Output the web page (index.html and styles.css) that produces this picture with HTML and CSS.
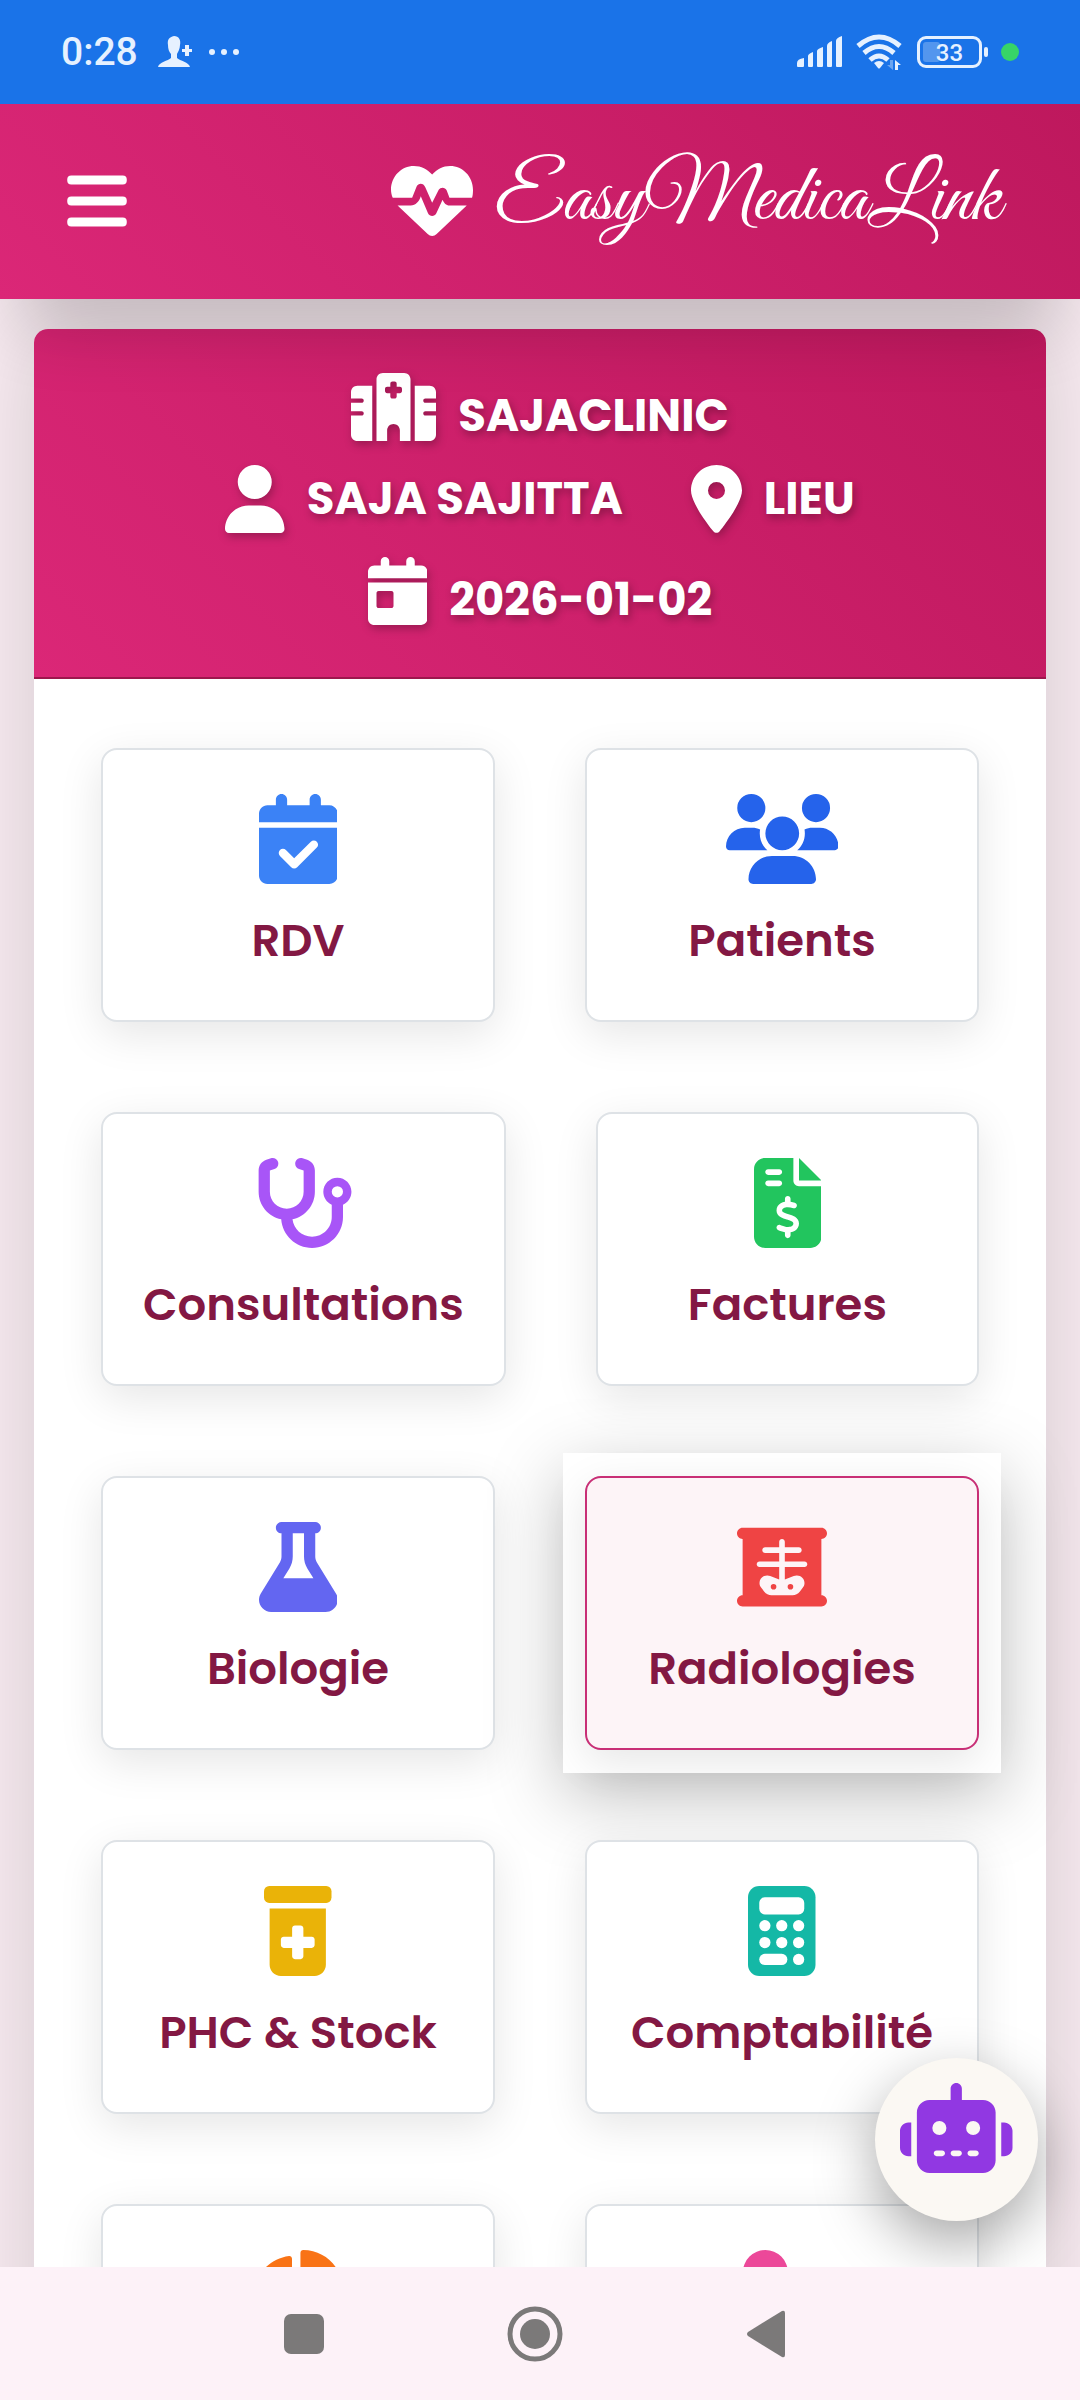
FILE: index.html
```
<!DOCTYPE html>
<html lang="fr">
<head>
    <meta charset="UTF-8">
    <meta name="viewport" content="width=device-width, initial-scale=1.0">
    <title>EasyMedicaLink</title>
    <link rel="stylesheet" href="styles.css">
</head>
<body>
    <!-- Barre d'état -->
    <div class="status-bar">
        <div class="status-group">
            <span class="clock">0:28</span>
            <svg class="status-user" viewBox="0 0 34 32"><path d="M16 0c5 0 7 4 6 9 0 4-2 7-3 9v4c3 3 12 4 13 9H0c1-5 10-6 13-9v-4c-2-2-3-5-3-9-1-5 1-8 6-9z"/><path d="M27 9h4v4h3v3h-3v4h-4v-4h-3v-3h3z"/></svg>
            <svg class="status-dots" viewBox="0 0 32 8"><circle cx="4" cy="4" r="3"/><circle cx="16" cy="4" r="3"/><circle cx="28" cy="4" r="3"/></svg>
        </div>
        <div class="status-group status-right">
            <svg class="signal" viewBox="0 0 46 32"><path d="M0 30v-3q0-4 7-5v8q0 1-1 1H1q-1 0-1-1zM11 20q0-2 5-4v14q0 1-1 1h-3q-1 0-1-1zM20 15q0-2 6-4v19q0 1-1 1h-4q-1 0-1-1zM30 10q0-3 5-5v25q0 1-1 1h-3q-1 0-1-1zM39 5q0-3 6-5v30q0 1-1 1h-4q-1 0-1-1z"/></svg>
            <svg class="wifi" viewBox="0 0 46 36">
                <g fill="none" stroke="#e6f1ff" stroke-width="5"><path d="M2 12Q23-6 44 12"/><path d="M8 19Q23 6 38 19"/><path d="M14 26Q23 18 32 26"/></g>
                <path d="M18 29q5-4 10 0l-4 5q-1 1-2 0z"/><path d="M39 36V26l6 5h-3v5z"/><path opacity=".4" d="M37 26v10l-6-5h3v-5z"/>
            </svg>
            <div class="battery"><span class="battery-level"></span><span class="battery-text">33</span></div>
            <span class="green-dot"></span>
        </div>
    </div>

    <div class="app">
        <header class="header">
            <button class="menu-btn" type="button" aria-label="Menu">
                <svg class="icon-bars" viewBox="0 0 448 512"><rect y="64" width="448" height="68" rx="30"/><rect y="222" width="448" height="68" rx="30"/><rect y="380" width="448" height="68" rx="30"/></svg>
            </button>
            <a class="brand" href="#">
                <svg class="brand-icon" viewBox="0 0 512 512"><path d="M11 236C4 219 0 202 0 185 0 103 64 37 143 37c46 0 84 19 114 54 30-35 68-54 112-54 79 0 143 66 143 148 0 17-1 35-6 51H365l-17-46c-10-22-39-22-50-4l-41 81-43-97c-12-28-42-28-54-5l-28 71zM41 284h82c31 0 53-24 63-57l45 105c11 23 41 23 52 0l39-84c9 21 22 36 43 36h108L285 462c-16 16-40 16-56 0z"/></svg>
                <span class="brand-name">EasyMedicaLink</span>
            </a>
        </header>

        <main class="panel">
            <section class="banner">
                <div class="info-row info-row-low">
                    <div class="info">
                        <svg viewBox="0 0 640 512"><path d="M192 48c0-26.500 21.500-48 48-48L400 0c26.500 0 48 21.500 48 48l0 464-80 0 0-80c0-26.500-21.500-48-48-48s-48 21.500-48 48l0 80-80 0 0-464zM48 96l112 0 0 416L48 512c-26.500 0-48-21.500-48-48L0 320l80 0c8.800 0 16-7.200 16-16s-7.200-16-16-16L0 288l0-64 80 0c8.800 0 16-7.200 16-16s-7.200-16-16-16L0 192l0-48c0-26.500 21.500-48 48-48zm544 0c26.500 0 48 21.500 48 48l0 48-80 0c-8.800 0-16 7.200-16 16s7.200 16 16 16l80 0 0 64-80 0c-8.800 0-16 7.200-16 16s7.200 16 16 16l80 0 0 144c0 26.500-21.500 48-48 48l-112 0 0-416 112 0zM312 64c-8.800 0-16 7.200-16 16l0 24-24 0c-8.800 0-16 7.200-16 16l0 16c0 8.800 7.200 16 16 16l24 0 0 24c0 8.800 7.200 16 16 16l16 0c8.800 0 16-7.200 16-16l0-24 24 0c8.800 0 16-7.200 16-16l0-16c0-8.800-7.200-16-16-16l-24 0 0-24c0-8.800-7.200-16-16-16l-16 0z"/></svg>
                        <span>SAJACLINIC</span>
                    </div>
                </div>
                <div class="info-row">
                    <div class="info">
                        <svg viewBox="0 0 448 512"><path d="M224 256A128 128 0 1 0 224 0a128 128 0 1 0 0 256zm-45.700 48C79.800 304 0 383.800 0 482.300C0 498.700 13.300 512 29.700 512l388.600 0c16.400 0 29.700-13.300 29.700-29.700C448 383.800 368.200 304 269.700 304l-91.400 0z"/></svg>
                        <span>SAJA SAJITTA</span>
                    </div>
                    <div class="info">
                        <svg viewBox="0 0 384 512"><path d="M215.700 499.200C267 435 384 279.400 384 192C384 86 298 0 192 0S0 86 0 192c0 87.400 117 243 168.300 307.200c12.300 15.300 35.100 15.300 47.400 0zM192 128a64 64 0 1 1 0 128 64 64 0 1 1 0-128z"/></svg>
                        <span>LIEU</span>
                    </div>
                </div>
                <div class="info-row info-row-low">
                    <div class="info">
                        <svg viewBox="0 0 448 512"><path d="M128 0c17.700 0 32 14.300 32 32l0 32 128 0 0-32c0-17.700 14.300-32 32-32s32 14.300 32 32l0 32 48 0c26.500 0 48 21.500 48 48l0 48L0 160l0-48C0 85.500 21.500 64 48 64l48 0 0-32c0-17.700 14.300-32 32-32zM0 192l448 0 0 272c0 26.500-21.500 48-48 48L48 512c-26.500 0-48-21.500-48-48L0 192zm80 64c-8.800 0-16 7.200-16 16l0 96c0 8.800 7.200 16 16 16l96 0c8.800 0 16-7.200 16-16l0-96c0-8.800-7.200-16-16-16l-96 0z"/></svg>
                        <span>2026-01-02</span>
                    </div>
                </div>
            </section>

            <nav class="menu">
                <div class="menu-row">
                    <a class="tile-link" href="#">
                        <div class="tile">
                            <svg fill="#3b82f6" viewBox="0 0 448 512"><path d="M128 0c17.700 0 32 14.300 32 32l0 32 128 0 0-32c0-17.700 14.300-32 32-32s32 14.300 32 32l0 32 48 0c26.500 0 48 21.500 48 48l0 48L0 160l0-48C0 85.500 21.500 64 48 64l48 0 0-32c0-17.700 14.300-32 32-32zM0 192l448 0 0 272c0 26.500-21.500 48-48 48L48 512c-26.500 0-48-21.500-48-48L0 192zM329 305c9.400-9.400 9.400-24.600 0-33.900s-24.600-9.400-33.900 0l-95 95-47-47c-9.400-9.400-24.600-9.400-33.900 0s-9.400 24.600 0 33.900l64 64c9.400 9.400 24.600 9.400 33.900 0L329 305z"/></svg>
                            <span class="tile-label">RDV</span>
                        </div>
                    </a>
                    <a class="tile-link" href="#">
                        <div class="tile">
                            <svg fill="#2563eb" viewBox="0 0 640 512"><path d="M144 0a80 80 0 1 1 0 160A80 80 0 1 1 144 0zM512 0a80 80 0 1 1 0 160A80 80 0 1 1 512 0zM0 298.700C0 239.800 47.800 192 106.700 192l42.700 0c15.900 0 31 3.500 44.600 9.700c-1.300 7.200-1.900 14.700-1.900 22.300c0 38.200 16.800 72.500 43.300 96L21.300 320C9.600 320 0 310.400 0 298.700zM405.300 320c26.600-23.500 43.300-57.800 43.300-96c0-7.600-.7-15-1.900-22.300c13.600-6.300 28.700-9.700 44.600-9.700l42.700 0C592.200 192 640 239.800 640 298.700c0 11.800-9.600 21.300-21.300 21.300l-213.300 0zM224 224a96 96 0 1 1 192 0 96 96 0 1 1 -192 0zM128 485.300C128 411.700 187.700 352 261.300 352l117.300 0C452.300 352 512 411.700 512 485.300c0 14.700-11.900 26.700-26.700 26.700l-330.700 0c-14.700 0-26.700-11.900-26.700-26.700z"/></svg>
                            <span class="tile-label">Patients</span>
                        </div>
                    </a>
                </div>

                <div class="menu-row">
                    <a class="tile-link" href="#">
                        <div class="tile">
                            <svg fill="#a855f7" viewBox="0 0 576 512"><path d="M142.400 21.900c5.600 16.800-3.500 34.900-20.200 40.500L96 71.100 96 192c0 53 43 96 96 96s96-43 96-96l0-120.900-26.100-8.700c-16.800-5.600-25.800-23.700-20.200-40.500s23.700-25.800 40.500-20.200l26.100 8.700C334.400 19.100 352 43.500 352 71.100L352 192c0 77.200-54.600 141.600-127.300 156.700C231 404.600 278.400 448 336 448c61.900 0 112-50.100 112-112l0-70.700c-28.300-12.300-48-40.500-48-73.300c0-44.200 35.800-80 80-80s80 35.800 80 80c0 32.800-19.700 61-48 73.300l0 70.700c0 97.200-78.800 176-176 176c-92.900 0-168.900-71.900-175.500-163.100C87.200 334.200 32 269.600 32 192L32 71.100c0-27.500 17.600-52 43.800-60.700l26.100-8.700c16.800-5.600 34.900 3.500 40.500 20.200zM480 224a32 32 0 1 0 0-64 32 32 0 1 0 0 64z"/></svg>
                            <span class="tile-label">Consultations</span>
                        </div>
                    </a>
                    <a class="tile-link" href="#">
                        <div class="tile">
                            <svg fill="#22c55e" viewBox="0 0 384 512"><path d="M64 0C28.700 0 0 28.700 0 64L0 448c0 35.300 28.700 64 64 64l256 0c35.300 0 64-28.700 64-64l0-288-128 0c-17.700 0-32-14.300-32-32L224 0 64 0zM256 0l0 128 128 0L256 0zM64 80c0-8.800 7.200-16 16-16l64 0c8.800 0 16 7.200 16 16s-7.200 16-16 16L80 96c-8.800 0-16-7.200-16-16zm0 64c0-8.800 7.200-16 16-16l64 0c8.800 0 16 7.200 16 16s-7.200 16-16 16l-64 0c-8.800 0-16-7.200-16-16zm128 72c8.800 0 16 7.200 16 16l0 17.300c8.500 1.200 16.700 3.100 24.100 5.100c8.500 2.300 13.600 11 11.300 19.600s-11 13.600-19.600 11.300c-11.100-3-22-5.200-32.100-5.300c-8.400-.1-17.400 1.800-23.600 5.500c-5.700 3.400-8.100 7.300-8.100 12.800c0 3.700 1.300 6.500 7.300 10.100c6.900 4.100 16.600 7.100 29.200 10.900l.5 .1c11.300 3.400 25.300 7.600 36.300 14.600c12.100 7.600 22.400 19.700 22.700 38.200c.3 19.300-9.600 33.300-22.900 41.600c-7.700 4.800-16.400 7.600-25.100 9.100l0 17.100c0 8.800-7.200 16-16 16s-16-7.200-16-16l0-17.800c-11.200-2.100-21.700-5.700-30.900-8.900c-2.100-.7-4.200-1.400-6.200-2.100c-8.400-2.800-12.900-11.900-10.100-20.200s11.900-12.900 20.200-10.100c2.500 .8 4.800 1.600 7.100 2.400c13.600 4.600 24.600 8.400 36.300 8.700c9.100 .3 17.900-1.700 23.700-5.300c5.100-3.200 7.900-7.300 7.800-14c-.1-4.600-1.800-7.800-7.700-11.600c-6.800-4.300-16.500-7.400-29-11.200l-1.600-.5c-11-3.300-24.300-7.300-34.800-13.700c-12-7.200-22.600-18.900-22.700-37.300c-.1-19.400 10.800-32.800 23.800-40.500c7.500-4.400 15.800-7.200 24.100-8.700l0-17.300c0-8.800 7.200-16 16-16z"/></svg>
                            <span class="tile-label">Factures</span>
                        </div>
                    </a>
                </div>

                <div class="menu-row">
                    <a class="tile-link" href="#">
                        <div class="tile">
                            <svg fill="#6366f1" viewBox="0 0 448 512"><path d="M288 0L160 0 128 0C110.300 0 96 14.300 96 32s14.300 32 32 32l0 132.800c0 11.800-3.300 23.500-9.500 33.500L10.300 406.200C3.600 417.200 0 429.700 0 442.600C0 480.900 31.100 512 69.400 512l309.200 0c38.300 0 69.400-31.100 69.400-69.400c0-12.800-3.600-25.400-10.300-36.400L329.500 230.400c-6.200-10.100-9.500-21.700-9.500-33.500L320 64c17.700 0 32-14.300 32-32s-14.300-32-32-32L288 0zM192 196.800L192 64l64 0 0 132.800c0 23.700 6.600 46.900 19 67.100L309.500 320l-171 0L173 263.900c12.400-20.200 19-43.400 19-67.100z"/></svg>
                            <span class="tile-label">Biologie</span>
                        </div>
                    </a>
                    <a class="tile-link active" href="#">
                        <div class="tile">
                            <svg fill="#ef4444" viewBox="0 0 512 512"><path d="M0 64C0 46.300 14.300 32 32 32l448 0c17.700 0 32 14.300 32 32s-14.300 32-32 32l0 320c17.700 0 32 14.300 32 32s-14.300 32-32 32L32 480c-17.700 0-32-14.300-32-32s14.300-32 32-32L32 96C14.300 96 0 81.700 0 64zm256 32c-8.800 0-16 7.200-16 16l0 32-80 0c-8.800 0-16 7.200-16 16s7.200 16 16 16l80 0 0 48-112 0c-8.800 0-16 7.200-16 16s7.200 16 16 16l112 0 0 70.600L189.100 307c-5.200-2-10.600-3-16.200-3l-2.100 0c-23.600 0-42.800 19.200-42.800 42.800c0 9.600 3.200 18.900 9.100 26.400l18.200 23.200c9.700 12.400 24.600 19.600 40.300 19.600l120.800 0c15.700 0 30.600-7.200 40.300-19.600l18.200-23.200c5.900-7.500 9.100-16.800 9.100-26.400c0-23.600-19.200-42.800-42.800-42.800l-2.200 0c-5.500 0-11 1-16.200 3L272 326.600l0-70.600 112 0c8.800 0 16-7.200 16-16s-7.200-16-16-16l-112 0 0-48 80 0c8.800 0 16-7.200 16-16s-7.200-16-16-16l-80 0 0-32c0-8.800-7.200-16-16-16zM208 352a16 16 0 1 1 0 32 16 16 0 1 1 0-32zm80 16a16 16 0 1 1 32 0 16 16 0 1 1 -32 0z"/></svg>
                            <span class="tile-label">Radiologies</span>
                        </div>
                    </a>
                </div>

                <div class="menu-row">
                    <a class="tile-link" href="#">
                        <div class="tile">
                            <svg fill="#eab308" viewBox="0 0 384 512"><rect width="384" height="96" rx="30"/><path d="M32 128l320 0 0 320c0 35.300-28.700 64-64 64L96 512c-35.300 0-64-28.700-64-64l0-320zM160 240l0 48-48 0c-8.800 0-16 7.200-16 16l0 32c0 8.800 7.200 16 16 16l48 0 0 48c0 8.800 7.200 16 16 16l32 0c8.800 0 16-7.200 16-16l0-48 48 0c8.800 0 16-7.200 16-16l0-32c0-8.800-7.200-16-16-16l-48 0 0-48c0-8.800-7.200-16-16-16l-32 0c-8.800 0-16 7.200-16 16z" fill-rule="evenodd"/></svg>
                            <span class="tile-label">PHC &amp; Stock</span>
                        </div>
                    </a>
                    <a class="tile-link" href="#">
                        <div class="tile">
                            <svg fill="#14b8a6" viewBox="0 0 384 512"><rect width="384" height="512" rx="64"/><g fill="#fff"><rect x="64" y="64" width="256" height="98" rx="32"/><circle cx="96" cy="226" r="32"/><circle cx="192" cy="226" r="32"/><circle cx="288" cy="226" r="32"/><circle cx="96" cy="322" r="32"/><circle cx="192" cy="322" r="32"/><circle cx="288" cy="322" r="32"/><rect x="64" y="386" width="160" height="64" rx="32"/><circle cx="288" cy="418" r="32"/></g></svg>
                            <span class="tile-label">Comptabilité</span>
                        </div>
                    </a>
                </div>

                <div class="menu-row">
                    <a class="tile-link" href="#" aria-label="Statistiques">
                        <div class="tile">
                            <svg fill="#f97316" viewBox="0 0 576 512"><path d="M304 240l0-223.400c0-9 7-16.600 16-16.600C443.700 0 544 100.300 544 224c0 9-7.600 16-16.600 16L304 240zM32 272C32 150.700 122.100 50.300 239 34.300c9.200-1.300 17 6.100 17 15.400L256 288 412.500 444.500c6.700 6.700 6.200 17.700-1.500 23.100C371.800 495.600 323.800 512 272 512C139.500 512 32 404.600 32 272zm526.400 16c9.300 0 16.600 7.800 15.400 17c-7.700 55.900-34.600 105.600-73.900 142.300c-6 5.600-15.400 5.200-21.200-.7L320 288l238.400 0z"/></svg>
                        </div>
                    </a>
                    <a class="tile-link" href="#" aria-label="Utilisateurs">
                        <div class="tile">
                            <svg fill="#ec4899" viewBox="0 0 640 512"><path d="M224 256A128 128 0 1 0 224 0a128 128 0 1 0 0 256zm-45.700 48C79.800 304 0 383.800 0 482.300C0 498.700 13.300 512 29.700 512l388.600 0c16.400 0 29.700-13.300 29.700-29.700C448 383.800 368.200 304 269.700 304l-91.400 0z"/></svg>
                        </div>
                    </a>
                </div>
            </nav>
        </main>

        <button class="chat-btn" type="button" aria-label="Assistant">
            <svg viewBox="0 0 640 512"><path d="M320 0c17.700 0 32 14.300 32 32l0 64 120 0c39.800 0 72 32.200 72 72l0 272c0 39.800-32.200 72-72 72l-304 0c-39.800 0-72-32.200-72-72l0-272c0-39.800 32.200-72 72-72l120 0 0-64c0-17.700 14.300-32 32-32zM208 384c-8.800 0-16 7.200-16 16s7.200 16 16 16l32 0c8.800 0 16-7.200 16-16s-7.200-16-16-16l-32 0zm96 0c-8.800 0-16 7.200-16 16s7.200 16 16 16l32 0c8.800 0 16-7.200 16-16s-7.200-16-16-16l-32 0zm96 0c-8.800 0-16 7.200-16 16s7.200 16 16 16l32 0c8.800 0 16-7.200 16-16s-7.200-16-16-16l-32 0zM264 256a40 40 0 1 0 -80 0 40 40 0 1 0 80 0zm152 40a40 40 0 1 0 0-80 40 40 0 1 0 0 80zM48 224l16 0 0 192-16 0c-26.500 0-48-21.500-48-48l0-96c0-26.500 21.500-48 48-48zm544 0c26.500 0 48 21.500 48 48l0 96c0 26.500-21.500 48-48 48l-16 0 0-192 16 0z"/></svg>
        </button>
    </div>

    <!-- Barre de navigation -->
    <div class="nav-bar">
        <button type="button" aria-label="Applications"><svg viewBox="0 0 56 56"><rect x="8" y="8" width="40" height="40" rx="7"/></svg></button>
        <button type="button" aria-label="Accueil"><svg viewBox="0 0 56 56"><circle cx="28" cy="28" r="25" fill="none" stroke="#7b7979" stroke-width="5"/><circle cx="28" cy="28" r="15"/></svg></button>
        <button type="button" aria-label="Retour"><svg viewBox="0 0 56 56"><path d="M10 26L44 5q3-1 3 2v42q0 3-3 2L10 30q-2-2 0-4z"/></svg></button>
    </div>
</body>
</html>
```
FILE: styles.css
```
* {
    box-sizing: border-box;
}

body {
    margin: 0;
    height: 100vh;
    display: flex;
    flex-direction: column;
    overflow: hidden;
    font-family: Poppins, Inter, sans-serif;
    background: #fdf2f8;
}

button {
    border: none;
    padding: 0;
    background: none;
    cursor: pointer;
}

a {
    color: inherit;
    text-decoration: none;
}

svg {
    display: block;
}

/* Barre d'état */
.status-bar {
    height: 104px;
    flex-shrink: 0;
    display: flex;
    justify-content: space-between;
    align-items: center;
    padding: 0 61px;
    background: #1a73e8;
    color: #e6f1ff;
    fill: #e6f1ff;
    font-family: Roboto, sans-serif;
}

.status-group {
    display: flex;
    align-items: center;
}

.status-right {
    gap: 13px;
}

.clock {
    font-size: 39px;
    line-height: 44px;
    font-weight: 500;
}

.status-user {
    width: 34px;
    height: 32px;
    margin: 0 16px 0 20px;
}

.status-dots {
    width: 32px;
    height: 8px;
}

.signal {
    width: 46px;
    height: 32px;
}

.wifi {
    width: 46px;
    height: 36px;
}

.battery {
    position: relative;
    width: 65px;
    height: 32px;
    margin: 0 6px 0 2px;
    border: 3px solid #e6f1ff;
    border-radius: 9px;
    text-align: center;
}

.battery::after {
    content: "";
    position: absolute;
    right: -9px;
    top: 8px;
    width: 4px;
    height: 10px;
    border-radius: 2px;
    background: #e6f1ff;
}

.battery-level {
    position: absolute;
    left: 3px;
    top: 3px;
    width: 17px;
    height: 20px;
    border-radius: 3px;
    background: rgba(255, 255, 255, 0.25);
}

.battery-text {
    position: relative;
    display: block;
    font-size: 24px;
    line-height: 28px;
    font-weight: 500;
}

.green-dot {
    width: 18px;
    height: 18px;
    border-radius: 50%;
    background: #37d468;
}

/* Application */
.app {
    position: relative;
    flex: 1;
    min-height: 0;
    overflow: hidden;
    background: #f8ebf1;
}

.header {
    position: relative;
    z-index: 2;
    display: flex;
    justify-content: space-between;
    align-items: center;
    height: 195px;
    padding: 0 79px 2px 67px;
    background: linear-gradient(45deg, #db2777, #be185d);
    box-shadow: 0 45px 70px -20px rgba(0, 0, 0, 0.2);
    color: #fff;
    fill: #fff;
}

.icon-bars {
    width: 60px;
    height: 68px;
    fill: #fff;
}

.brand {
    display: flex;
    align-items: center;
    gap: 22px;
}

.brand-icon {
    width: 82px;
    height: 82px;
}

.brand-name {
    font-family: "Great Vibes", "Liberation Serif", cursive;
    font-size: 81px;
    line-height: 90px;
}

.panel {
    margin: 30px 34px 0;
    border-radius: 14px;
    background: #fff;
    box-shadow: 0 0 90px rgba(0, 0, 0, 0.15);
}

.banner {
    display: flex;
    flex-direction: column;
    gap: 24px;
    padding: 44px 45px 52px;
    border-bottom: 2px solid #9d174d;
    border-radius: 14px 14px 0 0;
    background: linear-gradient(45deg, #db2777, #be185d);
    color: #fff;
    fill: #fff;
    font-size: 45px;
    font-weight: 700;
    line-height: 50px;
    text-shadow: 2px 4px 8px rgba(0, 0, 0, 0.3);
}

.info-row {
    display: flex;
    justify-content: center;
    gap: 68px;
}

.info {
    display: flex;
    align-items: center;
    gap: 22px;
}

.info-row-low .info {
    align-items: flex-end;
}

.info svg {
    height: 68px;
    filter: drop-shadow(2px 4px 4px rgba(0, 0, 0, 0.25));
}

/* Menu */
.menu {
    display: flex;
    flex-direction: column;
    gap: 44px;
    padding: 46px 45px;
}

.menu-row {
    display: flex;
    gap: 46px;
}

.tile-link {
    flex: 1;
    padding: 23px 22px;
}

.tile-link.active {
    background: #fff;
    box-shadow: 0 22px 70px rgba(0, 0, 0, 0.26);
}

.tile {
    display: flex;
    flex-direction: column;
    align-items: center;
    gap: 22px;
    min-height: 274px;
    padding: 44px 40px;
    border: 2px solid #dee2e6;
    border-radius: 16px;
    background: #fff;
    box-shadow: 0 12px 44px rgba(0, 0, 0, 0.1);
}

.active .tile {
    border-color: #c82f76;
    background: #fdf4f7;
}

.tile svg {
    height: 90px;
}

.tile-label {
    color: #831843;
    font-size: 45px;
    font-weight: 600;
    line-height: 70px;
    white-space: nowrap;
}

.chat-btn {
    position: absolute;
    right: 42px;
    bottom: 46px;
    z-index: 3;
    display: flex;
    justify-content: center;
    width: 163px;
    height: 163px;
    padding-top: 25px;
    border-radius: 50%;
    background: #fbf8f3;
    box-shadow: 0 22px 60px rgba(0, 0, 0, 0.35);
}

.chat-btn svg {
    height: 90px;
    fill: #9138e2;
}

/* Barre de navigation */
.nav-bar {
    height: 133px;
    flex-shrink: 0;
    display: flex;
    justify-content: center;
    align-items: center;
    gap: 175px;
    padding-right: 10px;
    background: #fdf2f8;
    fill: #7b7979;
}

.nav-bar svg {
    width: 56px;
    height: 56px;
    fill: #7b7979;
}
```
